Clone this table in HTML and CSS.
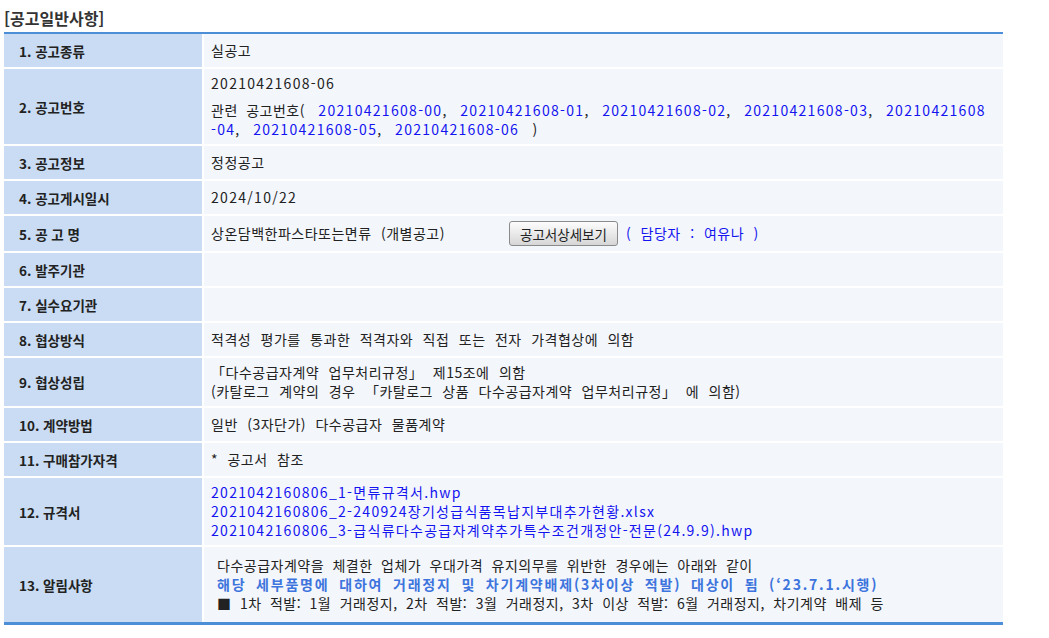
FILE: index.html
```
<!DOCTYPE html>
<html lang="ko">
<head>
    <meta charset="UTF-8">
    <title>공고일반사항</title>
    <link rel="stylesheet" href="styles.css">
</head>
<body>
    <h2 class="section-title">[공고일반사항]</h2>

    <table class="info-table">
        <tr>
            <th>1. 공고종류</th>
            <td>실공고</td>
        </tr>
        <tr>
            <th>2. 공고번호</th>
            <td>
                <div class="main-no num">20210421608-06</div>
                <div class="related"><span class="related-label">관련 공고번호(</span> <a class="num" href="#">20210421608-00</a>, <a class="num" href="#">20210421608-01</a>, <a class="num" href="#">20210421608-02</a>, <a class="num" href="#">20210421608-03</a>, <a class="num" href="#">20210421608<wbr>-04</a>, <a class="num" href="#">20210421608-05</a>, <a class="num" href="#">20210421608-06</a> )</div>
            </td>
        </tr>
        <tr>
            <th>3. 공고정보</th>
            <td>정정공고</td>
        </tr>
        <tr>
            <th>4. 공고게시일시</th>
            <td class="num">2024/10/22</td>
        </tr>
        <tr>
            <th>5. 공 고 명</th>
            <td>
                <div class="title-row">
                    <span class="notice-name">상온담백한파스타또는면류 (개별공고)</span>
                    <button class="detail-btn">공고서상세보기</button>
                    <span class="manager">( 담당자 : 여유나 )</span>
                </div>
            </td>
        </tr>
        <tr>
            <th>6. 발주기관</th>
            <td></td>
        </tr>
        <tr>
            <th>7. 실수요기관</th>
            <td></td>
        </tr>
        <tr>
            <th>8. 협상방식</th>
            <td>적격성 평가를 통과한 적격자와 직접 또는 전자 가격협상에 의함</td>
        </tr>
        <tr>
            <th>9. 협상성립</th>
            <td>「다수공급자계약 업무처리규정」 제15조에 의함<br>(카탈로그 계약의 경우 「카탈로그 상품 다수공급자계약 업무처리규정」 에 의함)</td>
        </tr>
        <tr>
            <th>10. 계약방법</th>
            <td>일반 (3자단가) 다수공급자 물품계약</td>
        </tr>
        <tr>
            <th>11. 구매참가자격</th>
            <td>* 공고서 참조</td>
        </tr>
        <tr>
            <th>12. 규격서</th>
            <td class="files">
                <a href="#">2021042160806_1-면류규격서.hwp</a><br>
                <a href="#">2021042160806_2-240924장기성급식품목납지부대추가현황.xlsx</a><br>
                <a href="#">2021042160806_3-급식류다수공급자계약추가특수조건개정안-전문(24.9.9).hwp</a>
            </td>
        </tr>
        <tr>
            <th>13. 알림사항</th>
            <td>
                <div class="notice-box">
                    다수공급자계약을 체결한 업체가 우대가격 유지의무를 위반한 경우에는 아래와 같이<br>
                    <strong class="warn">해당 세부품명에 대하여 거래정지 및 차기계약배제(3차이상 적발) 대상이 됨 (‘23.7.1.시행)</strong><br>
                    ■ 1차 적발: 1월 거래정지, 2차 적발: 3월 거래정지, 3차 이상 적발: 6월 거래정지, 차기계약 배제 등
                </div>
            </td>
        </tr>
    </table>
</body>
</html>
```

FILE: styles.css
```
body {
    margin: 0;
    padding: 0 4px;
    background-color: #fff;
    font-family: "Noto Sans CJK KR", "Noto Sans", sans-serif;
    color: #222;
}

.section-title {
    margin: 0;
    padding-top: 7px;
    height: 25px;
    line-height: 22px;
    font-size: 16px;
    font-weight: bold;
    color: #333;
}

.info-table {
    width: 999px;
    border-collapse: separate;
    border-spacing: 0;
    border-top: 2px solid #4d8fd6;
    border-bottom: 3px solid #4d8fd6;
    font-size: 14px;
}

.info-table th {
    width: 183px;
    height: 23px;
    padding: 5px 0 5px 15px;
    background-color: #c9dcf3;
    border-right: 2px solid #fff;
    border-bottom: 2px solid #fff;
    text-align: left;
    font-size: 13.5px;
    font-weight: bold;
    color: #222;
}

.info-table td {
    height: 23px;
    padding: 5px 8px 5px 7px;
    background-color: #f3f6fb;
    border-bottom: 2px solid #fff;
    line-height: 19px;
    letter-spacing: 0.5px;
    word-spacing: 5px;
    vertical-align: middle;
}

.info-table tr:last-child th,
.info-table tr:last-child td {
    border-bottom: none;
}

.info-table .num,
.info-table td.files {
    letter-spacing: 1.3px;
}

.info-table a {
    color: #1414f0;
    text-decoration: none;
}

.main-no {
    margin-bottom: 8px;
}

.related {
    word-spacing: 9px;
}

.related-label {
    word-spacing: 4px;
}

.title-row {
    display: flex;
    align-items: center;
}

.notice-name {
    width: 298px;
}

.detail-btn {
    height: 25px;
    padding: 0 10px;
    border: 1px solid #8a8a8a;
    border-radius: 3px;
    background: linear-gradient(#fdfdfd, #d6d6d6);
    font-family: "Noto Sans CJK KR", sans-serif;
    font-size: 13.5px;
    color: #222;
}

.manager {
    margin-left: 8px;
    color: #1414f0;
}

.notice-box {
    padding: 4px 6px;
    word-spacing: 4px;
}

.warn {
    color: #3d74dd;
    letter-spacing: 1.8px;
    word-spacing: 4px;
}
```
